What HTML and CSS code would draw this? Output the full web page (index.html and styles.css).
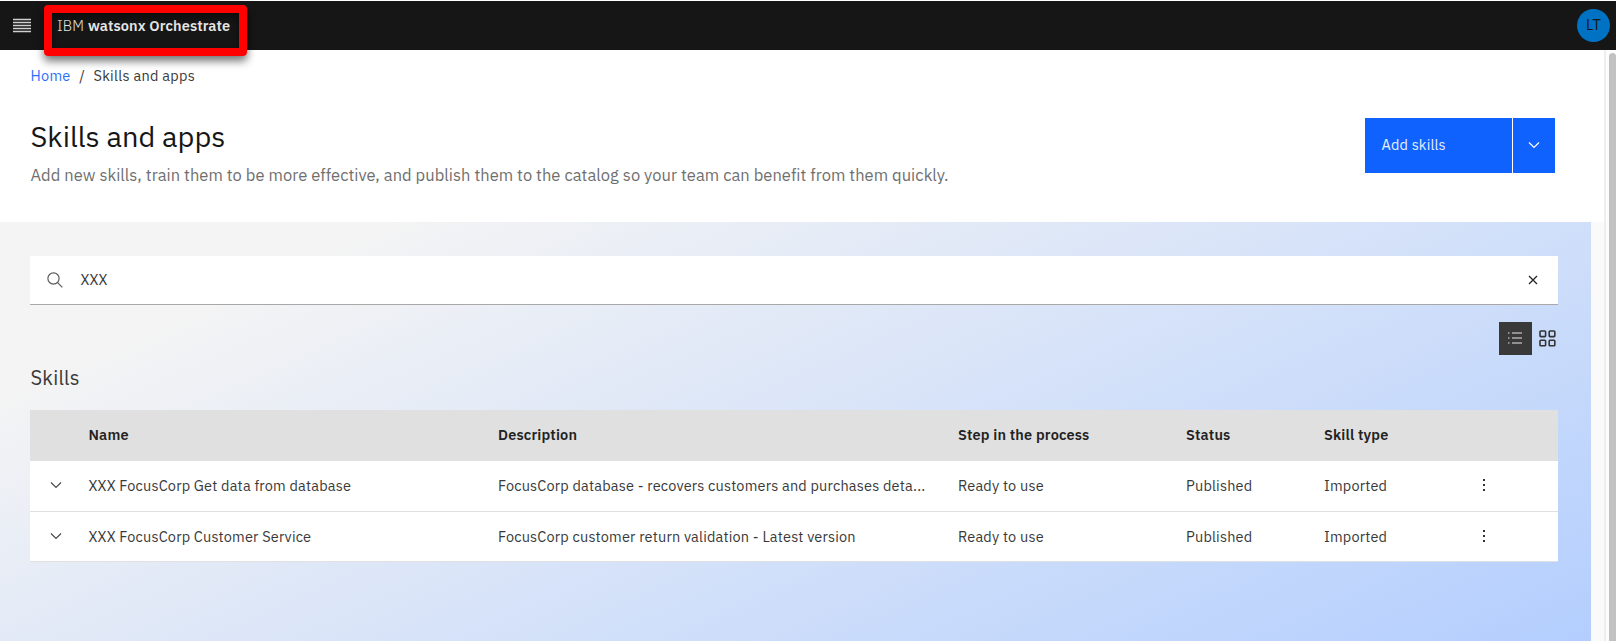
FILE: index.html
```html
<!DOCTYPE html>
<html lang="en">
<head>
<meta charset="utf-8">
<title>Skills and apps</title>
<link rel="stylesheet" href="styles.css">
</head>
<body>
<header class="topbar">
  <svg class="menu" viewBox="0 0 18 15"><path d="M0 1.5h18M0 4.5h18M0 7.5h18M0 10.5h18M0 13.5h18"/></svg>
  <div class="brand"><span class="brand-ibm">IBM</span><span class="brand-name">watsonx Orchestrate</span></div>
  <div class="avatar">LT</div>
</header>
<div class="shell">
  <main class="page">
    <section class="intro">
      <nav class="crumbs"><a class="home">Home</a><span class="slash">/</span><span class="here">Skills and apps</span></nav>
      <div class="hero">
        <div class="hero-text">
          <h1 class="title">Skills and apps</h1>
          <p class="lead">Add new skills, train them to be more effective, and publish them to the catalog so your team can benefit from them quickly.</p>
        </div>
        <div class="split"><button class="add">Add skills</button><button class="more"><svg viewBox="0 0 12 8"><path d="M1 1.5l5 5 5-5"/></svg></button></div>
      </div>
    </section>
    <section class="content">
      <div class="search">
        <svg class="glass" viewBox="0 0 16 16"><circle cx="6.5" cy="6.5" r="5.6"/><path d="M10.6 10.6l4.7 4.7"/></svg>
        <span class="query">XXX</span>
        <svg class="clear" viewBox="0 0 10 10"><path d="M1 1l8 8M9 1l-8 8"/></svg>
      </div>
      <div class="views">
        <div class="view-list"><svg viewBox="0 0 14 14"><path d="M4 2h10M4 7h10M4 12h10M0 2h1.5M0 7h1.5M0 12h1.5"/></svg></div>
        <svg class="view-grid" viewBox="0 0 17 17"><rect x="1" y="1" width="5.6" height="5.6" rx=".8"/><rect x="10.2" y="1" width="5.6" height="5.6" rx=".8"/><rect x="1" y="10.2" width="5.6" height="5.6" rx=".8"/><rect x="10.2" y="10.2" width="5.6" height="5.6" rx=".8"/></svg>
      </div>
      <h2 class="subtitle">Skills</h2>
      <div class="table">
        <div class="row head"><span></span><span>Name</span><span>Description</span><span>Step in the process</span><span>Status</span><span>Skill type</span><span></span></div>
        <div class="row">
          <svg class="chev" viewBox="0 0 12 8"><path d="M1 1.5l5 5 5-5"/></svg>
          <span>XXX FocusCorp Get data from database</span><span>FocusCorp database - recovers customers and purchases deta...</span><span>Ready to use</span><span>Published</span><span>Imported</span>
          <svg class="dots" viewBox="0 0 4 14"><path d="M1 1h2v2H1zM1 6h2v2H1zM1 11h2v2H1z"/></svg>
        </div>
        <div class="row last">
          <svg class="chev" viewBox="0 0 12 8"><path d="M1 1.5l5 5 5-5"/></svg>
          <span>XXX FocusCorp Customer Service</span><span>FocusCorp customer return validation - Latest version</span><span>Ready to use</span><span>Published</span><span>Imported</span>
          <svg class="dots" viewBox="0 0 4 14"><path d="M1 1h2v2H1zM1 6h2v2H1zM1 11h2v2H1z"/></svg>
        </div>
      </div>
    </section>
  </main>
  <div class="gutter"></div>
  <div class="track"><div class="thumb"></div></div>
</div>
<div class="callout"></div>
</body>
</html>
```

FILE: styles.css
```css
* { box-sizing: border-box; }
body { margin: 0; padding-top: 1px; height: 641px; overflow: hidden; background: #fff; color: #393939; font-family: "IBM Plex Sans", Roboto, "Liberation Sans", sans-serif; font-size: 14.5px; letter-spacing: .18px; }
h1, h2, p { margin: 0; font-weight: 400; }
svg { display: block; fill: none; }
.topbar { height: 49px; background: #161616; display: flex; align-items: center; padding: 0 6px 1px 13px; color: #f4f4f4; }
.menu { width: 18px; height: 15px; stroke: #d0d0d0; stroke-width: 1.3; }
.brand { margin-left: 26px; flex: 1; display: flex; gap: 4px; color: #e8e8e8; letter-spacing: .12px; }
.brand-ibm { font-weight: 300; }
.brand-name { font-weight: 600; }
.avatar { width: 33px; height: 33px; margin-top: 1px; border-radius: 50%; background: #0072c3; color: #161616; text-align: center; line-height: 31px; }
.shell { height: 591px; display: flex; }
.page { width: 1591px; }
.intro { height: 172px; padding: 16px 36px 0 30.5px; }
.crumbs { display: flex; line-height: 19px; letter-spacing: .28px; }
.home { color: #2c6ffb; }
.slash { margin: 0 8.5px; }
.hero { display: flex; justify-content: space-between; margin-top: 33px; }
.title { font-size: 29px; line-height: 40px; margin-top: -2px; color: #161616; letter-spacing: 0; }
.lead { font-size: 16.5px; line-height: 24px; margin-top: 7px; color: #6f6f6f; white-space: nowrap; letter-spacing: .044px; }
.split { display: flex; gap: 1px; height: 55px; }
button { border: 0; padding: 0 0 2px; background: #0f62fe; color: #e8efff; font: inherit; letter-spacing: .15px; }
.add { width: 147px; padding-left: 16.5px; text-align: left; }
.more { width: 42px; display: grid; place-items: center; }
.more svg { width: 12px; height: 8px; stroke: #fff; stroke-width: 1.2; }
.content { height: 419px; padding: 33.5px 33.5px 0 30px; background: linear-gradient(156deg, #f4f4f4 0%, #f4f4f4 15%, #b3cefe 100%); }
.search { height: 49px; background: #fff; border-bottom: 1.5px solid #a8a8a8; display: flex; align-items: center; padding: 0 20px 0 17px; }
.glass { width: 16px; height: 16px; stroke: #5c5c5c; stroke-width: 1.2; }
.query { margin-left: 17.5px; flex: none; letter-spacing: .1px; }
.clear { width: 10px; height: 10px; margin-left: auto; stroke: #262626; stroke-width: 1.3; }
.views { display: flex; justify-content: flex-end; align-items: center; margin-top: 16.5px; padding-right: 2px; gap: 7px; height: 34px; }
.view-list { width: 33px; height: 33px; background: #393939; display: grid; place-items: center; }
.view-list svg { width: 14px; height: 14px; stroke: #e8e8e8; stroke-width: 1.2; }
.view-grid { width: 17px; height: 17px; stroke: #333; stroke-width: 1.6; }
.subtitle { font-size: 20px; line-height: 28px; margin-top: 8.5px; padding-left: .5px; letter-spacing: .25px; }
.table { margin-top: 18.5px; }
.row { height: 50.5px; padding-bottom: 1px; display: grid; grid-template-columns: 58.5px 409.5px 460px 228px 138px 158px 1fr; align-items: center; background: #fff; border-bottom: 1px solid #e0e0e0; white-space: nowrap; }
.head { height: 51px; padding-bottom: 2px; background: #e0e0e0; color: #222; font-weight: 600; }
.last { padding-bottom: 0; }
.chev { width: 12px; height: 8px; margin-left: 19.5px; stroke: #4a4a4a; stroke-width: 1.2; }
.dots { width: 4px; height: 14px; fill: #333; }
.gutter { width: 13px; border-top: 172px solid #fff; background: #fafafa; }
.track { flex: 1; border-left: 2px solid #eee; padding: 3px 0 0 2.5px; background: #fcfcfc; }
.thumb { height: 600px; border-radius: 4px 4px 0 0; background: #c1c1c1; }
.callout { position: absolute; left: 44px; top: 5px; width: 203px; height: 51px; border: 8px solid #f00; border-radius: 4px; box-shadow: 0 5px 9px rgba(0,0,0,.55), inset 0 4px 8px rgba(0,0,0,.5); }
```
